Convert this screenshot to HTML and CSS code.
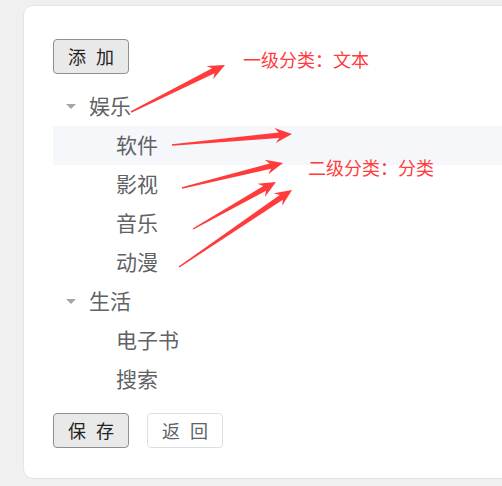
FILE: index.html
```html
<!DOCTYPE html>
<html>
<head>
    <meta charset="utf-8"/>
    <link rel="stylesheet" href="styles.css">
</head>
<body>
<div class="card">
    <button class="btn btn-gray">添 加</button>
    <div class="tree">
        <div class="node">
            <span class="caret"></span><span class="label">娱乐</span>
        </div>
        <div class="node child current"><span class="label">软件</span></div>
        <div class="node child"><span class="label">影视</span></div>
        <div class="node child"><span class="label">音乐</span></div>
        <div class="node child"><span class="label">动漫</span></div>
        <div class="node">
            <span class="caret"></span><span class="label">生活</span>
        </div>
        <div class="node child"><span class="label">电子书</span></div>
        <div class="node child"><span class="label">搜索</span></div>
    </div>
    <div class="actions">
        <button class="btn btn-gray">保 存</button>
        <button class="btn btn-plain">返 回</button>
    </div>
</div>

<div class="notes">
    <svg class="arrows" width="502" height="486" viewBox="0 0 502 486">
        <polygon points="131.31,112.63 214.62,73.31 213.15,79.31 225,65 206.45,65.89 212.12,68.31 130.69,111.37"/>
        <polygon points="172.06,145.70 279.31,137.98 275.75,143.02 292,134 274.39,128.08 278.79,132.40 171.94,144.30"/>
        <polygon points="182.17,188.68 271.05,168.84 268.30,174.37 283,163 264.70,159.81 269.71,163.40 181.83,187.32"/>
        <polygon points="193.34,229.61 266.07,190.85 264.91,196.91 276,182 257.51,183.85 263.31,185.97 192.66,228.39"/>
        <polygon points="179.39,267.58 282.84,199.63 282.17,205.77 292,190 273.73,193.37 279.68,195.01 178.61,266.42"/>
    </svg>
    <span class="note note-first">一级分类：文本</span>
    <span class="note note-second">二级分类：分类</span>
</div>
</body>
</html>
```

FILE: styles.css
```css
html, body {
    margin: 0;
    height: 100%;
    overflow: hidden;
}

body {
    background: #f0f0f0;
    padding: 5px 0 0 23px;
    box-sizing: border-box;
    font-family: 'Noto Sans CJK SC', 'Microsoft YaHei', sans-serif;
    position: relative;
}

.card {
    width: 560px;
    background: #fff;
    border: 1px solid #e4e4e4;
    border-radius: 10px;
    padding: 33px 0 30px 29px;
}

.btn {
    display: block;
    width: 76px;
    height: 35px;
    padding: 0 0 2px 3px;
    font-family: inherit;
    font-size: 18px;
    line-height: 1;
    letter-spacing: 3px;
    border-radius: 4px;
}

.btn-gray {
    background: #e9e9e9;
    border: 1px solid #8f8f8f;
    color: #222;
}

.btn-plain {
    background: #fff;
    border: 1px solid #dcdfe6;
    color: #606266;
}

.tree {
    margin: 13px 0 14px;
}

.tree .node {
    display: flex;
    align-items: center;
    height: 39px;
    font-size: 21px;
    color: #606266;
}

.tree .node .label {
    padding-bottom: 4px;
}

.tree .node.child {
    padding-left: 63px;
}

.tree .node.current {
    background: #f5f7fa;
}

.tree .caret {
    width: 36px;
    display: flex;
    justify-content: center;
}

.tree .caret::before {
    content: "";
    border-left: 5px solid transparent;
    border-right: 5px solid transparent;
    border-top: 5px solid #a3a6ad;
}

.actions {
    display: flex;
    gap: 18px;
}

.notes .arrows {
    position: absolute;
    left: 0;
    top: 0;
    fill: #ff3b3b;
    pointer-events: none;
}

.notes .note {
    position: absolute;
    font-size: 18px;
    line-height: 18px;
    color: #ff3b3b;
    white-space: nowrap;
}

.notes .note-first {
    left: 243px;
    top: 50px;
}

.notes .note-second {
    left: 308px;
    top: 158px;
}
```
